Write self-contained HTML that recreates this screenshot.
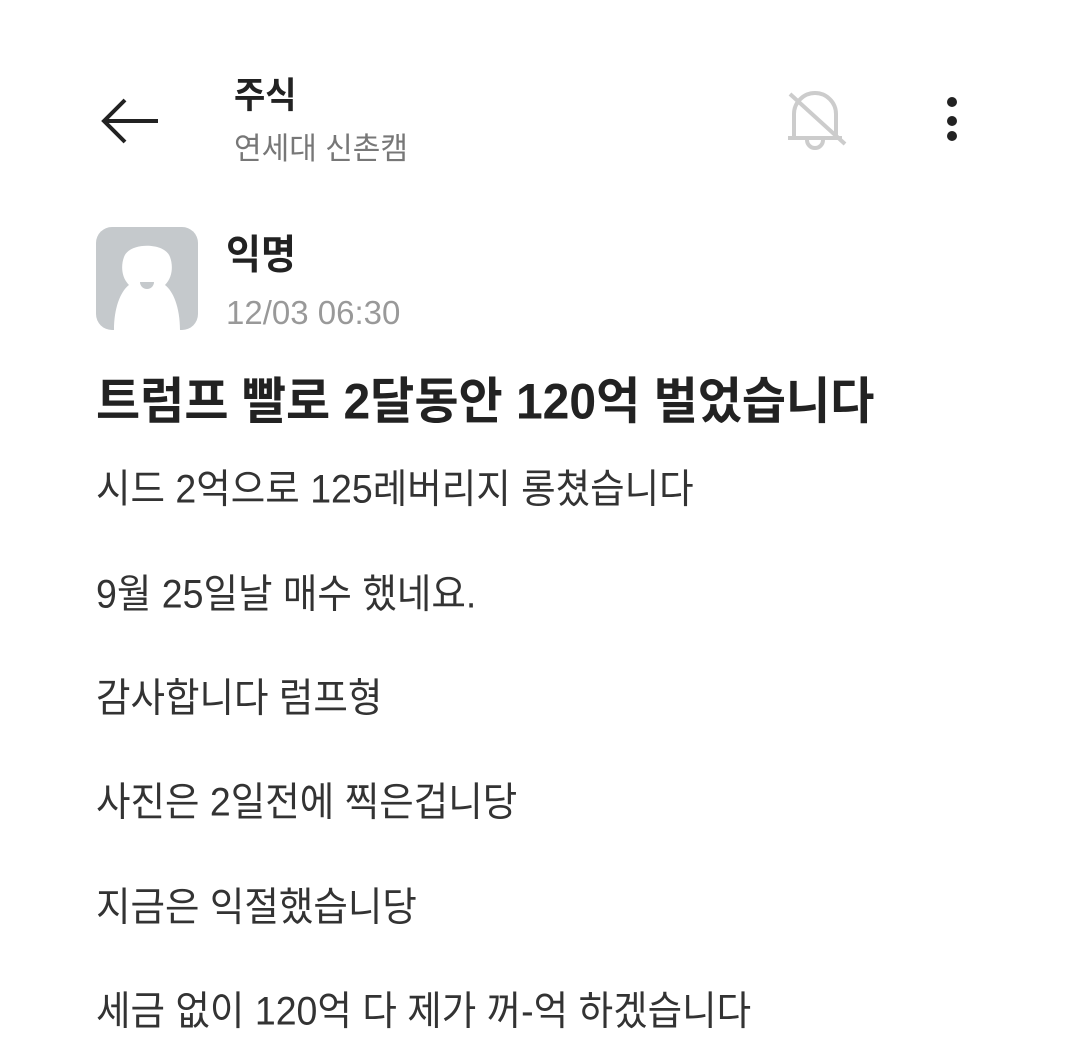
<!DOCTYPE html>
<html><head><meta charset="utf-8"><style>
html,body{margin:0;padding:0;background:#fff;}
body{width:1080px;height:1063px;position:relative;overflow:hidden;font-family:"Liberation Sans","Noto Sans CJK KR",sans-serif;}
.a{position:absolute;white-space:nowrap;line-height:1;}
.b{font-size:37.5px;color:#333;left:96px;transform:scaleY(1.06);transform-origin:left center;}
</style></head><body>
<svg class="a" style="left:100px;top:96px" width="62" height="50" viewBox="0 0 62 50"><path d="M58 25H5M25 4L4 25L25 46" fill="none" stroke="#222" stroke-width="4"/></svg>
<div class="a" style="left:234px;top:79px;font-size:34px;font-weight:bold;color:#222;transform:scaleY(1.06)">주식</div>
<div class="a" style="left:234px;top:135px;font-size:30px;color:#777;transform:scaleY(1.02)">연세대 신촌캠</div>
<svg class="a" style="left:780px;top:86px" width="70" height="66" viewBox="0 0 70 66"><path d="M14 50V28a21 21 0 0 1 42 0v22M8 52h54M27 54a8 8 0 0 0 16 0M10 8l55 50" fill="none" stroke="#ccc" stroke-width="4"/></svg>
<div class="a" style="left:947px;top:97px;width:10px;height:10px;border-radius:50%;background:#222"></div>
<div class="a" style="left:947px;top:116px;width:10px;height:10px;border-radius:50%;background:#222"></div>
<div class="a" style="left:947px;top:131px;width:10px;height:10px;border-radius:50%;background:#222"></div>
<svg class="a" style="left:96px;top:227px" width="102" height="103" viewBox="0 0 102 103"><rect width="102" height="103" rx="16" fill="#c5c9cc"/><path d="M18 103C18 80 25 64 33 58C25 50 25 38 28 30C33 15 69 15 74 30C77 38 77 50 69 58C77 64 84 80 84 103Z" fill="#fff"/><path d="M44 55h14a7 7 0 0 1-14 0z" fill="#c5c9cc"/></svg>
<div class="a" style="left:226px;top:237px;font-size:38px;font-weight:bold;color:#222;transform:scaleY(1.06)">익명</div>
<div class="a" style="left:226px;top:296px;font-size:33px;color:#999;">12/03 06:30</div>
<div class="a" style="left:96px;top:379px;font-size:48px;font-weight:bold;color:#222;transform:scaleY(1.04);transform-origin:left center">트럼프 빨로 2달동안 120억 벌었습니다</div>
<div class="a b" style="top:471px">시드 2억으로 125레버리지 롱쳤습니다</div>
<div class="a b" style="top:576px">9월 25일날 매수 했네요.</div>
<div class="a b" style="top:680px">감사합니다 럼프형</div>
<div class="a b" style="top:784px">사진은 2일전에 찍은겁니당</div>
<div class="a b" style="top:889px">지금은 익절했습니당</div>
<div class="a b" style="top:993px">세금 없이 120억 다 제가 꺼-억 하겠습니다</div>
</body></html>
